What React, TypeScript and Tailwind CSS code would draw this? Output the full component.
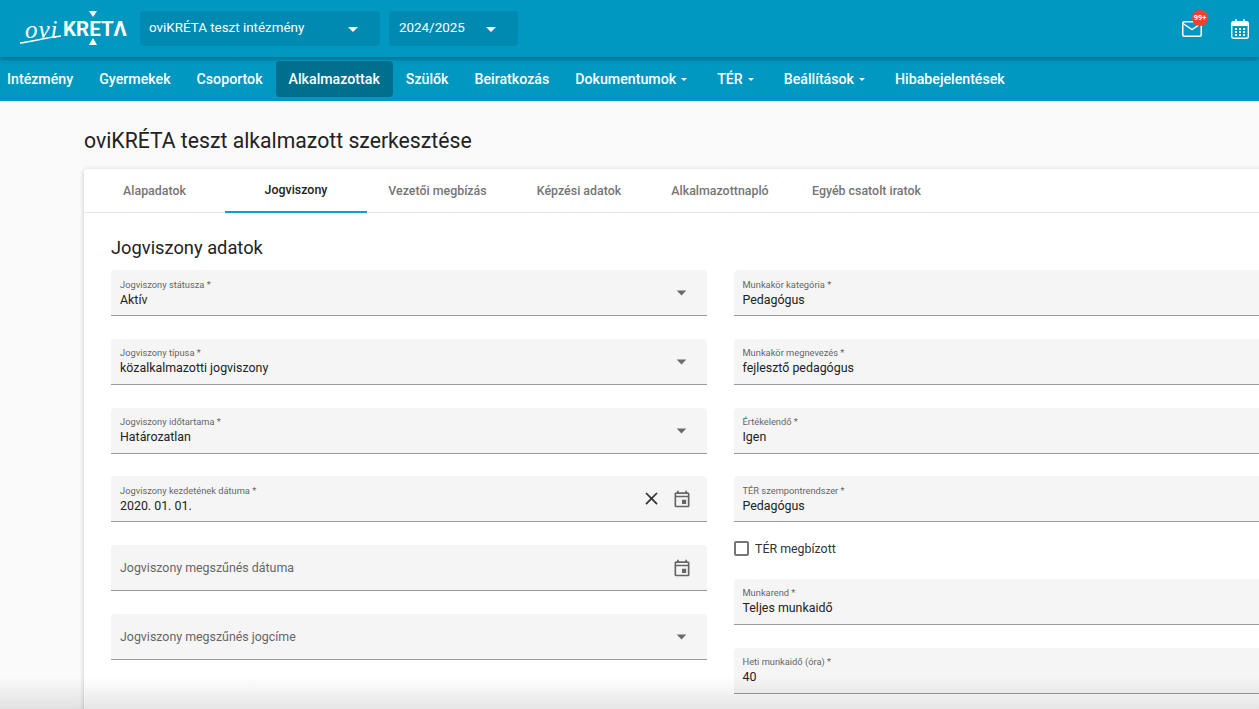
import { MdArrowDropDown, MdClose, MdOutlineEvent } from 'react-icons/md';

type Field = {
  label: string;
  value?: string;
  icon?: 'select' | 'date' | 'dateClear';
};

const navItems = [
  { label: 'Intézmény', cls: 'pl-[7px] pr-[13px]' },
  { label: 'Gyermekek', cls: 'px-[13px]' },
  { label: 'Csoportok', cls: 'px-[13px]' },
  { label: 'Alkalmazottak', cls: 'px-[13px] bg-[#006f8e] rounded' },
  { label: 'Szülők', cls: 'px-[13px]' },
  { label: 'Beiratkozás', cls: 'px-[13px]' },
  { label: 'Dokumentumok', cls: 'pl-[13px] pr-[17px]', caret: true },
  { label: 'TÉR', cls: 'pl-[13px] pr-[17px]', caret: true },
  { label: 'Beállítások', cls: 'pl-[13px] pr-[17px]', caret: true },
  { label: 'Hibabejelentések', cls: 'px-[13px]' },
];

const tabs = [
  { label: 'Alapadatok', w: 'w-[141px]' },
  { label: 'Jogviszony', w: 'w-[142px]', active: true },
  { label: 'Vezetői megbízás', w: 'w-[141px]' },
  { label: 'Képzési adatok', w: 'w-[142px]' },
  { label: 'Alkalmazottnapló', w: 'w-[140px]' },
  { label: 'Egyéb csatolt iratok', w: 'w-[153px]' },
];

const leftFields: Field[] = [
  { label: 'Jogviszony státusza *', value: 'Aktív', icon: 'select' },
  { label: 'Jogviszony típusa *', value: 'közalkalmazotti jogviszony', icon: 'select' },
  { label: 'Jogviszony időtartama *', value: 'Határozatlan', icon: 'select' },
  { label: 'Jogviszony kezdetének dátuma *', value: '2020. 01. 01.', icon: 'dateClear' },
  { label: 'Jogviszony megszűnés dátuma', icon: 'date' },
  { label: 'Jogviszony megszűnés jogcíme', icon: 'select' },
];

function FormField({ field }: { field: Field }) {
  return (
    <div className="h-[46px] shrink-0 bg-[#f5f5f5] rounded-t border-b-[1.5px] border-[#9a9a9a] pl-[9px] pr-[15px] flex items-center">
      <div className="flex-1 min-w-0">
        {field.value ? (
          <>
            <div className="text-[9.3px] leading-[13px] text-[#666]">{field.label}</div>
            <div className="text-[12.4px] leading-[17px] text-[#222] whitespace-nowrap">{field.value}</div>
          </>
        ) : (
          <div className="pt-[2px] text-[12.4px] text-[#666]">{field.label}</div>
        )}
      </div>
      {field.icon === 'select' && <MdArrowDropDown className="text-[23px] text-[#6b6b6b] -mr-[1px]" />}
      {field.icon === 'dateClear' && <MdClose className="text-[21px] text-[#333] mr-[10px]" />}
      {(field.icon === 'date' || field.icon === 'dateClear') && <MdOutlineEvent className="text-[20px] text-[#666]" />}
    </div>
  );
}

function Logo() {
  return (
    <div className="relative w-[106px] h-[36px] ml-[20px] text-white shrink-0">
      <span className="absolute left-[5px] top-[5px] text-[25px] leading-[28px] italic tracking-[1px] font-['Liberation_Serif',serif]">ovi</span>
      <span className="absolute left-[43px] top-[4px] text-[20.5px] leading-[28px] font-bold">KRETΛ</span>
      <svg className="absolute inset-0" width="106" height="36" viewBox="0 0 106 36" fill="white">
        <path d="M69 0h8l-4 6z" />
        <path d="M73 27l4 7h-8z" />
        <path d="M0 32c10-1 24-5 41-7" stroke="white" strokeWidth="1.6" fill="none" />
      </svg>
    </div>
  );
}

export default function App() {
  return (
    <div className="relative h-screen overflow-hidden bg-[#fafafa] font-['Roboto',sans-serif]">
      <header className="h-[57px] bg-[#0097c1] flex items-start pt-[11px] relative shadow-[0_2px_4px_rgba(0,0,0,0.3)]">
        <Logo />
        <div className="ml-[14px] w-[240px] h-[35px] rounded bg-[#008ab2] flex items-center pl-[9px] text-white text-[13.4px]">
          <span className="flex-1">oviKRÉTA teszt intézmény</span>
          <MdArrowDropDown className="text-[24px] mr-[15px]" />
        </div>
        <div className="ml-[9px] w-[129px] h-[35px] rounded bg-[#008ab2] flex items-center pl-[10px] text-white text-[13.4px]">
          <span className="flex-1">2024/2025</span>
          <MdArrowDropDown className="text-[24px] mr-[15px]" />
        </div>
        <div className="ml-auto flex items-center h-[35px] pr-[10px] text-white">
          <div className="relative">
            <svg className="block" width="20" height="16" viewBox="0 0 20 16" fill="none" stroke="white" strokeWidth="1.5">
              <rect x="0.75" y="0.75" width="18.5" height="14.5" rx="1.5" />
              <path d="M1 2.5l9 6 9-6" />
            </svg>
            <span className="absolute -top-[11px] -right-[6px] w-[16px] h-[16px] rounded-full bg-[#f4402c] text-[7.5px] font-bold flex items-center justify-center">99+</span>
          </div>
          <svg className="ml-[29px]" width="18" height="20" viewBox="0 0 18 20" fill="white" stroke="white" strokeWidth="1.4">
            <rect x="0.7" y="2.7" width="16.6" height="16.6" rx="2" fill="none" />
            <path d="M0.7 3h16.6v4H0.7z" stroke="none" />
            <path d="M5 0v3M13 0v3" fill="none" />
            <path d="M4 10h2M8 10h2M12 10h2M4 13h2M8 13h2M12 13h2M4 16h2M8 16h2M12 16h2" strokeWidth="1.8" fill="none" />
          </svg>
        </div>
      </header>

      <nav className="h-[44px] bg-[#0097c1] flex items-center text-white text-[14.2px] font-medium">
        {navItems.map(item => (
          <div key={item.label} className={`h-[36px] pt-[1px] flex items-center whitespace-nowrap ${item.cls}`}>
            {item.label}
            {item.caret && <span className="ml-[5px] w-0 h-0 border-x-[3px] border-x-transparent border-t-[3.5px] border-t-white" />}
          </div>
        ))}
      </nav>

      <main className="pl-[84px]">
        <h1 className="pt-[25px] pb-[13px] text-[21.2px] leading-[30px] text-[#222]">oviKRÉTA teszt alkalmazott szerkesztése</h1>
        <section className="bg-white rounded-tl shadow-[0_1px_5px_rgba(0,0,0,0.22)] w-[1300px]">
          <div className="h-[44px] flex border-b border-[#e6e6e6]">
            {tabs.map(tab => (
              <div
                key={tab.label}
                className={`${tab.w} h-[44px] flex items-center justify-center text-[12.4px] font-medium whitespace-nowrap ${tab.active ? 'text-[#222] border-b-2 border-[#0f9fc8]' : 'text-[#757575]'}`}
              >
                {tab.label}
              </div>
            ))}
          </div>
          <div className="pl-[27px] pt-[21px]">
            <h2 className="text-[18.3px] leading-[28px] text-[#222] mb-[8px]">Jogviszony adatok</h2>
            <div className="flex gap-[26.5px] items-start pb-[40px]">
              <div className="w-[596px] flex flex-col gap-[22.8px]">
                {leftFields.map(field => (
                  <FormField key={field.label} field={field} />
                ))}
              </div>
              <div className="flex-1 flex flex-col">
                <div className="flex flex-col gap-[22.8px]">
                  <FormField field={{ label: 'Munkakör kategória *', value: 'Pedagógus' }} />
                  <FormField field={{ label: 'Munkakör megnevezés *', value: 'fejlesztő pedagógus' }} />
                  <FormField field={{ label: 'Értékelendő *', value: 'Igen' }} />
                  <FormField field={{ label: 'TÉR szempontrendszer *', value: 'Pedagógus' }} />
                </div>
                <div className="h-[56.6px] flex items-start pt-[18.5px] gap-[6.5px] text-[12.4px] text-[#333]">
                  <span className="w-[15px] h-[15px] rounded-[2px] border-2 border-[#757575]" />
                  <span className="leading-[15px]">TÉR megbízott</span>
                </div>
                <div className="flex flex-col gap-[22.8px]">
                  <FormField field={{ label: 'Munkarend *', value: 'Teljes munkaidő' }} />
                  <FormField field={{ label: 'Heti munkaidő (óra) *', value: '40' }} />
                </div>
              </div>
            </div>
          </div>
        </section>
      </main>

      <div className="absolute inset-x-0 bottom-0 h-[32px] bg-gradient-to-t from-black/10 to-transparent pointer-events-none" />
    </div>
  );
}
